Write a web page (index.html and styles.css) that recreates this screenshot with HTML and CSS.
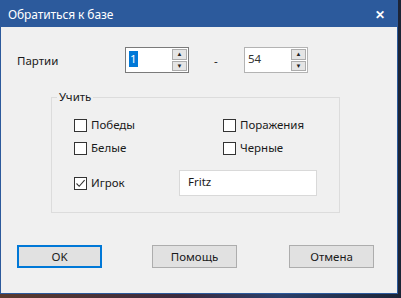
FILE: index.html
```html
<!DOCTYPE html>
<html lang="ru">
<head>
    <meta charset="UTF-8">
    <title>Обратиться к базе</title>
    <link rel="stylesheet" href="styles.css">
</head>
<body>
    <div class="window">
        <div class="titlebar">
            <span class="title">Обратиться к базе</span>
            <span class="close">✕</span>
        </div>
        <div class="content">
            <div class="range-row">
                <span class="range-label">Партии</span>
                <div class="spin focused">
                    <div class="spin-value"><span class="selected">1</span></div>
                    <div class="spin-buttons">
                        <button class="spin-btn">▲</button>
                        <button class="spin-btn">▼</button>
                    </div>
                </div>
                <span class="dash">-</span>
                <div class="spin">
                    <div class="spin-value">54</div>
                    <div class="spin-buttons">
                        <button class="spin-btn">▲</button>
                        <button class="spin-btn">▼</button>
                    </div>
                </div>
            </div>

            <fieldset class="group">
                <legend>Учить</legend>
                <div class="check-grid">
                    <label class="check"><span class="box"></span>Победы</label>
                    <label class="check"><span class="box"></span>Поражения</label>
                    <label class="check"><span class="box"></span>Белые</label>
                    <label class="check"><span class="box"></span>Черные</label>
                </div>
                <div class="player-row">
                    <label class="check"><span class="box checked">
                        <svg width="11" height="11" viewBox="0 0 11 11"><path d="M1.5 5.5 L4.2 8.3 L9.6 2.2" fill="none" stroke="#333" stroke-width="1.1"/></svg>
                    </span>Игрок</label>
                    <div class="player-field">Fritz</div>
                </div>
            </fieldset>

            <div class="buttons">
                <button class="btn default">OK</button>
                <button class="btn">Помощь</button>
                <button class="btn">Отмена</button>
            </div>
        </div>
    </div>
</body>
</html>
```

FILE: styles.css
```css
html, body {
    margin: 0;
    height: 100%;
}
body {
    background: linear-gradient(90deg, #5a3a2e 0%, #3b2a3e 45%, #2a3f6a 70%, #1c2436 100%);
    font-family: "Noto Sans", "Open Sans", sans-serif;
    font-size: 11.5px;
    color: #1a1a1a;
}
.window {
    width: 396px;
    height: 292px;
    border: 1px solid #2c5a9c;
    background: #f0f0f0;
    display: flex;
    flex-direction: column;
}
.titlebar {
    height: 26px;
    background: #2c5a9c;
    color: #ffffff;
    display: flex;
    align-items: center;
    justify-content: space-between;
    padding: 0 12px 0 7px;
    flex-shrink: 0;
}
.title {
    font-size: 12px;
    letter-spacing: -0.1px;
}
.close {
    font-size: 12px;
    font-weight: bold;
}
.content {
    flex: 1;
    padding: 20px 0 0 16px;
}
.range-row {
    display: flex;
    align-items: center;
    height: 26px;
}
.range-label {
    width: 108px;
}
.spin {
    width: 62px;
    height: 24px;
    border: 1px solid #b3b3b3;
    background: #ffffff;
    display: flex;
}
.spin.focused {
    border-color: #7a7a7a;
}
.spin-value {
    flex: 1;
    padding: 3px 0 0 3px;
    line-height: 16px;
    color: #333;
}
.selected {
    background: #0078d7;
    color: #ffffff;
    display: inline-block;
    padding: 0 1px;
}
.spin-buttons {
    width: 15px;
    display: flex;
    flex-direction: column;
    gap: 1px;
    padding: 1px 1px 1px 0;
}
.spin-btn {
    flex: 1;
    border: 1px solid #acacac;
    background: #e5e5e5;
    padding: 0;
    font-size: 6px;
    line-height: 8px;
    color: #222;
}
.dash {
    width: 55px;
    padding-left: 25px;
    box-sizing: border-box;
}
.group {
    margin: 17px 0 0 34px;
    width: 289px;
    height: 123px;
    border: 1px solid #dcdcdc;
    padding: 0;
    box-sizing: border-box;
}
.group legend {
    margin-left: 5px;
    padding: 0 2px;
    line-height: 14px;
}
.check-grid {
    display: grid;
    grid-template-columns: 149px auto;
    row-gap: 7px;
    padding: 13px 0 0 22px;
}
.check {
    display: flex;
    align-items: center;
    gap: 4px;
    line-height: 16px;
}
.box {
    width: 11px;
    height: 11px;
    border: 1px solid #333;
    background: #ffffff;
    display: inline-flex;
}
.player-row {
    display: flex;
    align-items: center;
    padding: 14px 0 0 22px;
}
.player-row .check {
    width: 105px;
}
.player-field {
    width: 138px;
    height: 26px;
    border: 1px solid #d9d9d9;
    background: #ffffff;
    padding: 3px 0 0 8px;
    line-height: 16px;
    box-sizing: border-box;
}
.buttons {
    display: flex;
    gap: 50px;
    margin-top: 32px;
}
.btn {
    width: 85px;
    height: 23px;
    border: 1px solid #adadad;
    background: #e1e1e1;
    font-family: inherit;
    font-size: 11.5px;
    color: #1a1a1a;
    padding: 0;
}
.btn.default {
    border: 2px solid #0078d7;
}
.btn + .btn + .btn {
    margin-left: 2px;
}
```
